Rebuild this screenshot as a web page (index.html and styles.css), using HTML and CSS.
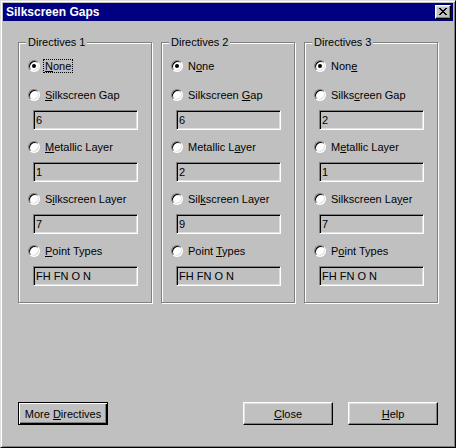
FILE: index.html
```html
<!DOCTYPE html>
<html>
<head>
<meta charset="utf-8">
<title>Silkscreen Gaps</title>
<link rel="stylesheet" href="styles.css">
</head>
<body>
<div class="window">
  <div class="titlebar">
    <span class="title">Silkscreen Gaps</span>
    <div class="close-btn">
      <svg width="8" height="7" viewBox="0 0 8 7" shape-rendering="crispEdges"><path fill="#000" d="M0 0h2v1H0zM6 0h2v1H6zM1 1h2v1H1zM5 1h2v1H5zM2 2h4v1H2zM3 3h2v1H3zM2 4h4v1H2zM1 5h2v1H1zM5 5h2v1H5zM0 6h2v1H0zM6 6h2v1H6z"/></svg>
    </div>
  </div>
  <div class="client">
    <div class="groups">
      <div class="group">
        <span class="legend">Directives 1</span>
        <div class="row"><span class="radio checked"></span><span class="lbl focus"><u>N</u>one</span></div>
        <div class="opt first">
          <div class="row"><span class="radio"></span><span class="lbl"><u>S</u>ilkscreen Gap</span></div>
          <div class="edit">6</div>
        </div>
        <div class="opt">
          <div class="row"><span class="radio"></span><span class="lbl"><u>M</u>etallic Layer</span></div>
          <div class="edit">1</div>
        </div>
        <div class="opt">
          <div class="row"><span class="radio"></span><span class="lbl">S<u>i</u>lkscreen Layer</span></div>
          <div class="edit">7</div>
        </div>
        <div class="opt">
          <div class="row"><span class="radio"></span><span class="lbl"><u>P</u>oint Types</span></div>
          <div class="edit">FH FN O N</div>
        </div>
      </div>
      <div class="group">
        <span class="legend">Directives 2</span>
        <div class="row"><span class="radio checked"></span><span class="lbl">N<u>o</u>ne</span></div>
        <div class="opt first">
          <div class="row"><span class="radio"></span><span class="lbl">Silkscreen <u>G</u>ap</span></div>
          <div class="edit">6</div>
        </div>
        <div class="opt">
          <div class="row"><span class="radio"></span><span class="lbl">Metallic L<u>a</u>yer</span></div>
          <div class="edit">2</div>
        </div>
        <div class="opt">
          <div class="row"><span class="radio"></span><span class="lbl">Sil<u>k</u>screen Layer</span></div>
          <div class="edit">9</div>
        </div>
        <div class="opt">
          <div class="row"><span class="radio"></span><span class="lbl">Point <u>T</u>ypes</span></div>
          <div class="edit">FH FN O N</div>
        </div>
      </div>
      <div class="group">
        <span class="legend">Directives 3</span>
        <div class="row"><span class="radio checked"></span><span class="lbl">Non<u>e</u></span></div>
        <div class="opt first">
          <div class="row"><span class="radio"></span><span class="lbl">Silks<u>c</u>reen Gap</span></div>
          <div class="edit">2</div>
        </div>
        <div class="opt">
          <div class="row"><span class="radio"></span><span class="lbl">M<u>e</u>tallic Layer</span></div>
          <div class="edit">1</div>
        </div>
        <div class="opt">
          <div class="row"><span class="radio"></span><span class="lbl">Silkscreen La<u>y</u>er</span></div>
          <div class="edit">7</div>
        </div>
        <div class="opt">
          <div class="row"><span class="radio"></span><span class="lbl">P<u>o</u>int Types</span></div>
          <div class="edit">FH FN O N</div>
        </div>
      </div>
    </div>
    <div class="buttons">
      <div class="btn default"><span>More <u>D</u>irectives</span></div>
      <div class="btn close"><span><u>C</u>lose</span></div>
      <div class="btn help"><span><u>H</u>elp</span></div>
    </div>
  </div>
</div>
</body>
</html>
```

FILE: styles.css
```css
html, body {
  margin: 0;
  padding: 0;
  background: #c0c0c0;
}
body {
  font-family: "Liberation Sans", Arial, sans-serif;
  font-size: 11px;
  color: #000;
}
.window {
  width: 456px;
  height: 448px;
  box-sizing: border-box;
  border: 1px solid;
  border-color: #dfdfdf #000 #000 #dfdfdf;
  box-shadow: inset 1px 1px 0 #fff, inset -1px -1px 0 #808080;
  padding: 2px;
  background: #c0c0c0;
}
.titlebar {
  height: 18px;
  background: #000080;
  display: flex;
  align-items: center;
  padding: 0 2px 0 3px;
}
.title {
  color: #fff;
  font-weight: bold;
  font-size: 12px;
  line-height: 18px;
  flex: 1;
}
.close-btn {
  width: 16px;
  height: 14px;
  box-sizing: border-box;
  border: 1px solid;
  border-color: #fff #000 #000 #fff;
  box-shadow: inset -1px -1px 0 #808080, inset 1px 1px 0 #dfdfdf;
  background: #c0c0c0;
  display: flex;
  align-items: flex-start;
  padding: 2px 0 0 3px;
}
.close-btn svg {
  display: block;
}
.client {
  padding: 0 15px;
}
.groups {
  margin-top: 21px;
  display: grid;
  grid-template-columns: 134px 134px 134px;
  column-gap: 9px;
}
.group {
  height: 261px;
  box-sizing: border-box;
  border: 1px solid #808080;
  box-shadow: 1px 1px 0 #fff, inset 1px 1px 0 #fff;
  padding: 0 0 0 9px;
  display: flex;
  flex-direction: column;
  align-items: flex-start;
}
.legend {
  margin: -7px 0 0 -2px;
  padding: 0 2px;
  line-height: 13px;
  height: 13px;
  background: #c0c0c0;
  white-space: nowrap;
}
.row {
  height: 14px;
  display: flex;
  align-items: center;
  margin-top: 10px;
}
.opt .row {
  margin-top: 0;
}
.opt {
  margin-top: 10px;
}
.opt.first {
  margin-top: 15px;
}
.radio {
  width: 12px;
  height: 12px;
  box-sizing: border-box;
  border-radius: 50%;
  border: 1px solid;
  border-color: #808080 #fff #fff #808080;
  box-shadow: inset 1px 1px 0 #000, inset -1px -1px 0 #dfdfdf;
  background: #fff;
  margin-right: 3px;
  display: flex;
  align-items: center;
  justify-content: center;
  flex: none;
}
.radio.checked::after {
  content: "";
  width: 4px;
  height: 4px;
  border-radius: 50%;
  background: #000;
}
.lbl {
  border: 1px dotted transparent;
  padding: 0 1px;
  line-height: 12px;
  white-space: nowrap;
}
.lbl.focus {
  border-color: #000;
}
.edit {
  margin: 8px 0 0 5px;
  width: 105px;
  height: 20px;
  box-sizing: border-box;
  border: 1px solid;
  border-color: #808080 #fff #fff #808080;
  box-shadow: inset 1px 1px 0 #000, inset -1px -1px 0 #dfdfdf;
  padding: 0 0 0 2px;
  line-height: 18px;
  white-space: nowrap;
}
.buttons {
  margin-top: 99px;
  display: flex;
}
.btn {
  width: 90px;
  height: 23px;
  box-sizing: border-box;
  border: 1px solid;
  border-color: #fff #000 #000 #fff;
  box-shadow: inset -1px -1px 0 #808080, inset 1px 1px 0 #dfdfdf;
  display: flex;
  align-items: center;
  justify-content: center;
  line-height: 12px;
  white-space: nowrap;
}
.btn.default {
  border-color: #000;
  box-shadow: inset 1px 1px 0 #fff, inset -1px -1px 0 #000, inset -2px -2px 0 #808080;
}
.btn.close {
  margin-left: auto;
}
.btn.help {
  margin-left: 15px;
}
```
